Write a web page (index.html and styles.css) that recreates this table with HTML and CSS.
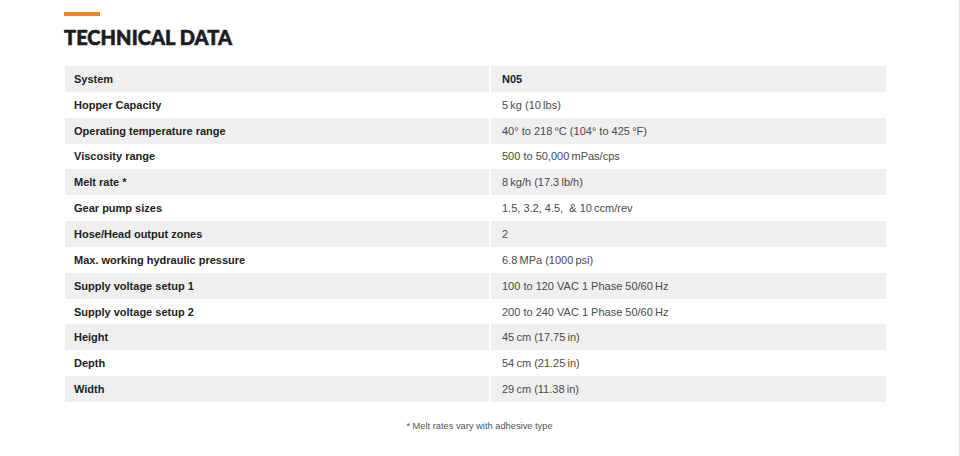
FILE: index.html
```html
<!DOCTYPE html>
<html lang="en">
<head>
<meta charset="utf-8">
<title>Technical Data</title>
<link rel="stylesheet" href="styles.css">
</head>
<body>
<main class="page">
  <header class="heading">
    <span class="accent"></span>
    <h1 class="title">TECHNICAL DATA</h1>
  </header>
  <div class="spec-table">
    <div class="row shaded"><div class="cell label">System</div><div class="cell value strong">N05</div></div>
    <div class="row"><div class="cell label">Hopper Capacity</div><div class="cell value">5&#8201;kg (10&#8201;lbs)</div></div>
    <div class="row shaded"><div class="cell label">Operating temperature range</div><div class="cell value">40° to 218&#8201;°C (104° to 425&#8201;°F)</div></div>
    <div class="row"><div class="cell label">Viscosity range</div><div class="cell value">500 to 50,000&#8201;mPas/cps</div></div>
    <div class="row shaded"><div class="cell label">Melt rate *</div><div class="cell value">8&#8201;kg/h (17.3&#8201;lb/h)</div></div>
    <div class="row"><div class="cell label">Gear pump sizes</div><div class="cell value">1.5, 3.2, 4.5, &nbsp;&amp; 10&#8201;ccm/rev</div></div>
    <div class="row shaded"><div class="cell label">Hose/Head output zones</div><div class="cell value">2</div></div>
    <div class="row"><div class="cell label">Max. working hydraulic pressure</div><div class="cell value">6.8&#8201;MPa (1000&#8201;psi)</div></div>
    <div class="row shaded"><div class="cell label">Supply voltage setup 1</div><div class="cell value">100 to 120 VAC 1 Phase 50/60&#8201;Hz</div></div>
    <div class="row"><div class="cell label">Supply voltage setup 2</div><div class="cell value">200 to 240 VAC 1 Phase 50/60&#8201;Hz</div></div>
    <div class="row shaded"><div class="cell label">Height</div><div class="cell value">45&#8201;cm (17.75&#8201;in)</div></div>
    <div class="row"><div class="cell label">Depth</div><div class="cell value">54&#8201;cm (21.25&#8201;in)</div></div>
    <div class="row shaded"><div class="cell label">Width</div><div class="cell value">29&#8201;cm (11.38&#8201;in)</div></div>
  </div>
  <p class="footnote">* Melt rates vary with adhesive type</p>
</main>
</body>
</html>
```
FILE: styles.css
```css
html, body {
  margin: 0;
  padding: 0;
  background: #ffffff;
}
body {
  width: 960px;
  height: 456px;
  overflow: hidden;
  font-family: "Liberation Sans", Arial, sans-serif;
}
.page {
  padding: 12px 74px 0 65px;
  box-sizing: border-box;
  width: 960px;
  height: 456px;
  border-right: 1px solid #e6e6e6;
}
.heading {
  display: flex;
  flex-direction: column;
  align-items: flex-start;
}
.accent {
  display: block;
  width: 36px;
  height: 4px;
  margin-left: -1px;
  background: #f7841f;
}
.title {
  margin: 9px 0 0 -1px;
  font-family: "Lato", "Liberation Sans", sans-serif;
  font-weight: 900;
  font-size: 20px;
  line-height: 24px;
  letter-spacing: 0.05px;
  color: #1d1d1f;
  -webkit-text-stroke: 0.6px #1d1d1f;
}
.spec-table {
  margin-top: 17px;
  display: flex;
  flex-direction: column;
  width: 821px;
}
.row {
  display: grid;
  grid-template-columns: 424px 395px;
  column-gap: 2px;
  height: 25.85px;
}
.cell {
  display: flex;
  align-items: center;
  font-size: 11px;
}
.shaded .cell {
  background: #efefef;
}
.label {
  padding-left: 9px;
  font-weight: bold;
  color: #222222;
}
.value {
  padding-left: 11px;
  color: #4a4a4a;
}
.value.strong {
  font-weight: bold;
  color: #222222;
}
.footnote {
  margin: 19px 0 0 0;
  text-align: center;
  font-size: 9.3px;
  color: #555555;
  width: 829px;
}
```
